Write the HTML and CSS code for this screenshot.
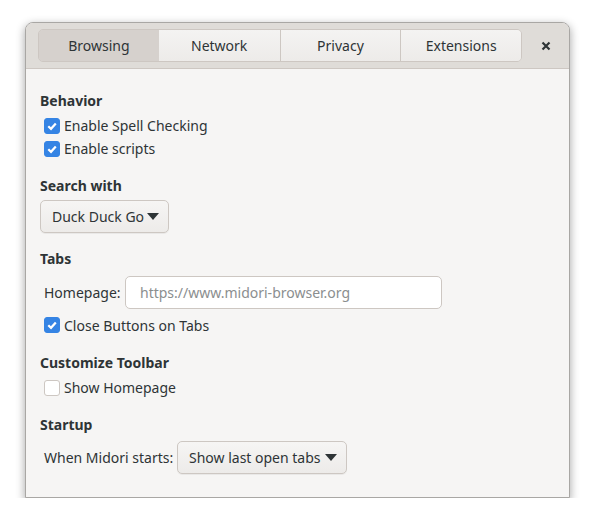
FILE: index.html
```html
<!DOCTYPE html>
<html>
<head>
<meta charset="utf-8">
<link rel="stylesheet" href="styles.css">
</head>
<body>
<div class="window">
  <div class="header">
    <div class="tabs">
      <div class="tab active">Browsing</div>
      <div class="tab">Network</div>
      <div class="tab">Privacy</div>
      <div class="tab">Extensions</div>
    </div>
    <div class="close">
      <svg width="10" height="10" viewBox="0 0 10 10"><path d="M1.5 1.5 L8.5 8.5 M8.5 1.5 L1.5 8.5" stroke="#2e3436" stroke-width="2.2" stroke-linecap="butt"/></svg>
    </div>
  </div>
  <div class="content">
    <div class="section">
      <div class="heading">Behavior</div>
      <label class="check"><span class="box on"><svg width="12" height="12" viewBox="0 0 12 12"><path d="M2.3 6.2 L5 8.8 L9.8 3.4" fill="none" stroke="#fff" stroke-width="2.2"/></svg></span>Enable Spell Checking</label>
      <label class="check"><span class="box on"><svg width="12" height="12" viewBox="0 0 12 12"><path d="M2.3 6.2 L5 8.8 L9.8 3.4" fill="none" stroke="#fff" stroke-width="2.2"/></svg></span>Enable scripts</label>
    </div>
    <div class="section">
      <div class="heading">Search with</div>
      <div class="combo combo-search"><span class="ctext">Duck Duck Go</span><span class="arrow"></span></div>
    </div>
    <div class="section">
      <div class="heading">Tabs</div>
      <div class="hrow hrow-home">
        <span class="label label-home">Homepage:</span>
        <div class="entry">https://www.midori-browser.org</div>
      </div>
      <label class="check check-after"><span class="box on"><svg width="12" height="12" viewBox="0 0 12 12"><path d="M2.3 6.2 L5 8.8 L9.8 3.4" fill="none" stroke="#fff" stroke-width="2.2"/></svg></span>Close Buttons on Tabs</label>
    </div>
    <div class="section">
      <div class="heading">Customize Toolbar</div>
      <label class="check"><span class="box"></span>Show Homepage</label>
    </div>
    <div class="section">
      <div class="heading">Startup</div>
      <div class="hrow">
        <span class="label label-start">When Midori starts:</span>
        <div class="combo combo-startup"><span class="ctext">Show last open tabs</span><span class="arrow"></span></div>
      </div>
    </div>
  </div>
</div>
</body>
</html>
```
FILE: styles.css
```css
* { box-sizing: border-box; }
html, body { margin: 0; padding: 0; background: #ffffff; }
body {
  font-family: "Noto Sans", "DejaVu Sans", sans-serif;
  font-size: 14px;
  color: #2e3436;
  padding: 22px 0 0 25px;
}
.window {
  width: 545px;
  height: 476px;
  background: #f6f5f4;
  border: 1px solid #a9a7a4;
  border-radius: 8px 8px 0 0;
  box-shadow: 0 3px 9px 1px rgba(0,0,0,0.3);
  overflow: hidden;
  display: flex;
  flex-direction: column;
}
.header {
  height: 46px;
  flex: none;
  background: #dfdcd8;
  border-bottom: 1px solid #cdc7c2;
  display: flex;
  align-items: flex-start;
  padding: 6px 0 0 12px;
}
.tabs {
  display: flex;
  height: 33px;
  border: 1px solid #cdc7c2;
  border-radius: 5px;
  overflow: hidden;
}
.tab {
  width: 121px;
  display: flex;
  align-items: center;
  justify-content: center;
  background: linear-gradient(#f4f3f2, #edebe9);
  border-left: 1px solid #cdc7c2;
  color: #2e3436;
  padding-bottom: 1px;
}
.tab:first-child { border-left: none; width: 120px; }
.tab.active {
  background: #d6d1cd;
  border-left: none;
}
.tab.active + .tab { border-left: none; }
.close {
  width: 46px;
  height: 33px;
  display: flex;
  align-items: center;
  justify-content: center;
  margin-left: 1px;
}
.content {
  padding: 22px 14px 0 14px;
}
.section { margin-bottom: 16px; }
.heading {
  font-weight: bold;
  height: 20px;
  line-height: 20px;
  margin-bottom: 3px;
}
.check {
  display: flex;
  align-items: center;
  height: 23px;
  padding-left: 4px;
}
.check-after { margin-top: 4px; height: 24px; }
.box {
  width: 16px;
  height: 16px;
  border-radius: 3px;
  margin-right: 4px;
  border: 1px solid #cdc7c2;
  background: #ffffff;
  display: flex;
  align-items: center;
  justify-content: center;
  flex: none;
}
.box.on {
  background: #3584e4;
  border-color: #3584e4;
}
.combo {
  height: 33px;
  border: 1px solid #cdc7c2;
  border-radius: 5px;
  background: linear-gradient(#f6f5f4, #edebe9);
  display: inline-flex;
  align-items: center;
  justify-content: space-between;
  padding: 0 9px 0 11px;
  margin-top: 1px;
  box-shadow: 0 1px 0 rgba(0,0,0,0.05);
  white-space: nowrap;
  flex: none;
}
.hrow .combo { margin-top: 0; }
.combo-search { width: 129px; }
.combo-startup { width: 170px; }
.ctext { white-space: nowrap; }
.arrow {
  flex: none;
  width: 0; height: 0;
  border-left: 6px solid transparent;
  border-right: 6px solid transparent;
  border-top: 7px solid #2e3436;
  margin-left: 3px;
}
.hrow {
  display: flex;
  align-items: center;
  margin-top: 6px;
  padding-left: 4px;
}
.hrow-home { margin-top: 7px; }
.label { white-space: nowrap; }
.label-home { width: 81px; }
.label-start { width: 133px; }
.entry {
  width: 317px;
  height: 33px;
  border: 1px solid #cdc7c2;
  border-radius: 5px;
  background: #ffffff;
  color: #8b8e8f;
  display: flex;
  align-items: center;
  padding-left: 14px;
  white-space: nowrap;
}
```
